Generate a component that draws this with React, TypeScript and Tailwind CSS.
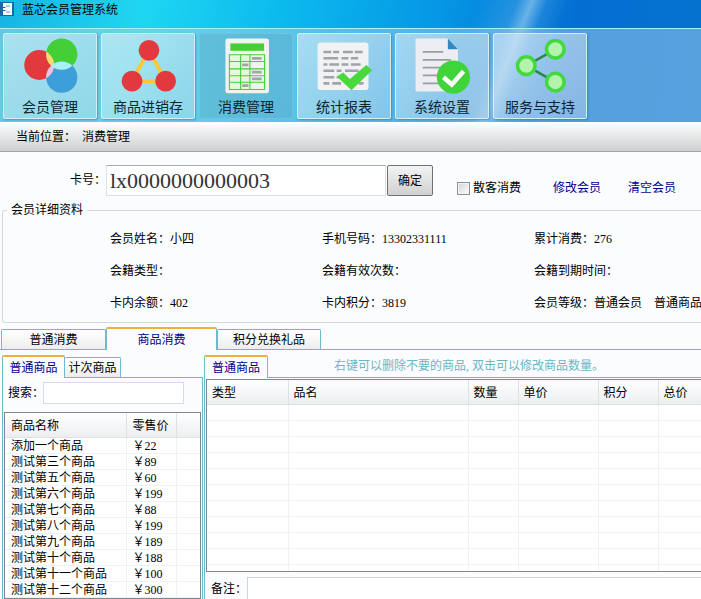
import React, { useState } from 'react';

interface ToolItem {
    label: string;
    icon: React.ReactNode;
}

interface Product {
    name: string;
    price: string;
}

interface TabProps {
    label: string;
    active?: boolean;
    className?: string;
    onClick?: () => void;
}

const MembersIcon = () => (
    <svg viewBox="0 0 94 60" className="h-[60px] w-full">
        <defs>
            <clipPath id="clipGreen"><circle cx="59" cy="20" r="16" /></clipPath>
            <clipPath id="clipBlue"><circle cx="59" cy="43.5" r="16" /></clipPath>
        </defs>
        <circle cx="36" cy="31" r="15.3" fill="#e2393f" />
        <circle cx="59" cy="20" r="16" fill="#43cf36" />
        <circle cx="59" cy="43.5" r="16" fill="#3d9fd9" />
        <circle cx="36" cy="31" r="15.3" fill="#fbd876" clipPath="url(#clipGreen)" />
        <circle cx="36" cy="31" r="15.3" fill="#f5bfe0" clipPath="url(#clipBlue)" />
        <circle cx="59" cy="20" r="16" fill="#a8f0f4" clipPath="url(#clipBlue)" />
    </svg>
);

const StockIcon = () => (
    <svg viewBox="0 0 94 60" className="h-[60px] w-full">
        <path d="M48 16 30.5 47.5H65Z" fill="none" stroke="#f6c93a" strokeWidth="4" />
        <circle cx="48" cy="16" r="10.6" fill="#e2393f" />
        <circle cx="30.7" cy="47.5" r="10.6" fill="#e2393f" />
        <circle cx="65" cy="47.5" r="10.6" fill="#e2393f" />
    </svg>
);

const ConsumeIcon = () => (
    <svg viewBox="0 0 94 60" className="h-[60px] w-full">
        <rect x="26" y="4" width="44.5" height="56" rx="2.5" fill="#f1f3f1" />
        <rect x="31" y="9" width="34.5" height="7.5" fill="#43cf36" />
        <path d="M30 20.5h11.5v35H30Z M41.5 20.5h9.5v35h-9.5Z" fill="#e2fbd8" />
        <path
            d="M30 20.5h36v35.5H30Z M41.5 20.5V56 M51 20.5V56 M30 27.5H66 M30 35H66 M30 42H66 M30 48.7H66"
            fill="none"
            stroke="#43cf36"
            strokeWidth="1.1"
        />
        <path d="M53 24.2h10 M43 31h6.5 M53 38.3h10 M53 45.2h10 M43 52h6.5" stroke="#a2a6a4" strokeWidth="2.8" />
    </svg>
);

const ReportIcon = () => (
    <svg viewBox="0 0 94 60" className="h-[60px] w-full">
        <rect x="20" y="8" width="52" height="48.5" rx="3" fill="#f1f2f4" />
        <g stroke="#a0a4a8" strokeWidth="2.6">
            <path d="M26 17.8h8M36 17.8h6M46 17.8h10M58 17.8h8" />
            <path d="M26 24.2h15M44.5 24.2h7M54 24.2h7.5" />
            <path d="M26 30.5h4M32 30.5h10M44.5 30.5h7M54 30.5h10" />
            <path d="M26 36.8h11M39.5 36.8h5M48 36.8h14" />
            <path d="M26 43.5h11M39.5 43.5h5" />
            <path d="M26 49.8h6M35 49.8h9M62 49.8h5" />
        </g>
        <path d="M39.7 42.7 46.3 38.7 53 45.3 69.7 31 75.7 36.5 54.7 56.7Z" fill="#49d93d" />
    </svg>
);

const SettingsIcon = () => (
    <svg viewBox="0 0 94 60" className="h-[60px] w-full">
        <path d="M20 5a1 1 0 0 1 1-1H53L63.3 15V57a1 1 0 0 1-1 1H21a1 1 0 0 1-1-1Z" fill="#eceef2" />
        <path d="M53 4V15H63.3Z" fill="#3588c0" />
        <path d="M27.3 17.7h21M27.3 25.7h29M27.3 33.7h29M27.3 41.7h20M27.3 49.7h20" stroke="#9b9da1" strokeWidth="1.8" />
        <circle cx="58.7" cy="43.3" r="17" fill="#3fd43a" />
        <path d="M48.5 43.5 57 51 69 37.5" fill="none" stroke="#fff" strokeWidth="4.6" />
    </svg>
);

const SupportIcon = () => (
    <svg viewBox="0 0 94 60" className="h-[60px] w-full">
        <path d="M62.7 15 33 31.7 62.7 48.5" fill="none" stroke="#2f8750" strokeWidth="2.6" />
        <g fill="#b4f3ad" stroke="#41d93c" strokeWidth="3.6">
            <circle cx="33" cy="31.7" r="9" />
            <circle cx="62.7" cy="15" r="9" />
            <circle cx="62.7" cy="48.5" r="9" />
        </g>
    </svg>
);

const tools: ToolItem[] = [
    { label: '会员管理', icon: <MembersIcon /> },
    { label: '商品进销存', icon: <StockIcon /> },
    { label: '消费管理', icon: <ConsumeIcon /> },
    { label: '统计报表', icon: <ReportIcon /> },
    { label: '系统设置', icon: <SettingsIcon /> },
    { label: '服务与支持', icon: <SupportIcon /> },
];

const memberInfo = [
    ['会员姓名：', '小四'],
    ['手机号码：', '13302331111'],
    ['累计消费：', '276'],
    ['会籍类型：', ''],
    ['会籍有效次数：', ''],
    ['会籍到期时间：', ''],
    ['卡内余额：', '402'],
    ['卡内积分：', '3819'],
    ['会员等级：', '普通会员', '普通商品'],
];

const products: Product[] = [
    { name: '添加一个商品', price: '22' },
    { name: '测试第三个商品', price: '89' },
    { name: '测试第五个商品', price: '60' },
    { name: '测试第六个商品', price: '199' },
    { name: '测试第七个商品', price: '88' },
    { name: '测试第八个商品', price: '199' },
    { name: '测试第九个商品', price: '189' },
    { name: '测试第十个商品', price: '188' },
    { name: '测试第十一个商品', price: '100' },
    { name: '测试第十二个商品', price: '300' },
];

const cartColumns = ['类型', '品名', '数量', '单价', '积分', '总价'];
const emptyRows = Array.from({ length: 11 }, (_, i) => i);
const mainTabs = ['普通消费', '商品消费', '积分兑换礼品'];
const mainTabWidths = ['w-[105px]', 'w-[111px]', 'w-[104px]'];

const Tab: React.FC<TabProps> = ({ label, active, className, onClick }) => (
    <button
        type="button"
        role="tab"
        aria-selected={!!active}
        onClick={onClick}
        className={
            (active
                ? 'relative -mb-px h-[23px] rounded-t-[2px] border-x border-t-2 border-x-[#6bbccb] border-t-[#edb038] bg-[#fbfcfe] text-[#00008f] '
                : 'h-5 rounded-t-[2px] border border-b-0 border-[#6bbccb] bg-linear-to-b from-white to-[#eceeec] pt-px ') + (className || '')
        }
    >
        {label}
    </button>
);

const App: React.FC = () => {
    const [activeTool, setActiveTool] = useState('消费管理');
    const [activeTab, setActiveTab] = useState('商品消费');
    const [productTab, setProductTab] = useState('普通商品');

    return (
        <div className="flex h-screen flex-col overflow-hidden bg-[#fbfcfe] font-['Liberation_Serif','Noto_Sans_CJK_SC',serif] text-[12px] leading-4 whitespace-nowrap text-black">
            <div className="shrink-0 bg-[linear-gradient(112deg,transparent_64%,#ffffff22_69%,#ffffff66_71%,#ffffff18_73%,transparent_76%),linear-gradient(100deg,#18b4e2_0%,#1fd6f2_20%,#0cbcee_38%,#0595e4_62%,#046fd2_80%,#0572cf_100%)]">
                <header className="flex h-7 items-start gap-2">
                    <svg viewBox="0 0 14 14" className="mt-[2px] h-[14px] w-[14px]">
                        <rect width="14" height="14" fill="#1c67a8" />
                        <path d="M3 1h9v12H3V9H5.500V8H3V6H5.500V5H3Z" fill="#f4fbff" />
                        <path d="M6 4h4M6 10h4" stroke="#5d9fd0" strokeWidth="1" />
                    </svg>
                    <h1 className="pt-[2px]">蓝芯会员管理系统</h1>
                </header>

                <nav className="flex h-[94px] gap-1 border-t border-[#a6f2fa] bg-linear-to-r from-[#a5d8de]/55 via-[#a8cfe6]/50 to-[#a8d0ee]/50 px-[3px] pt-1">
                    {tools.map((tool) => (
                        <button
                            key={tool.label}
                            type="button"
                            onClick={() => setActiveTool(tool.label)}
                            className={
                                'flex h-[86px] w-[94px] flex-col rounded-[2px] border ' +
                                (tool.label === activeTool
                                    ? 'border-[#6fc4e0] bg-[#5fa8c4]/40'
                                    : 'border-[#d3f0f7] bg-linear-to-br from-white/45 to-[#d8e0ee]/35 shadow-[1px_1px_2px_#2b6f9a88]')
                            }
                        >
                            {tool.icon}
                            <span className="w-full pt-1 text-center text-[14px] leading-5 text-[#0b2530]">{tool.label}</span>
                        </button>
                    ))}
                </nav>
            </div>

            <div className="flex h-[30px] shrink-0 items-center gap-[6px] border-b border-[#9fa3a6] bg-linear-to-b from-white to-[#cdd0d1] pl-4">
                <span>当前位置：</span>
                <span>消费管理</span>
            </div>

            <form className="flex h-11 shrink-0 items-end pl-[70px]" onSubmit={(e) => e.preventDefault()}>
                <label htmlFor="card" className="w-9 self-center pt-3">卡号：</label>
                <input
                    id="card"
                    defaultValue="lx0000000000003"
                    className="h-[31px] w-[280px] border border-[#dcdfe3] border-t-[#a9adb3] bg-white px-[3px] text-[22px] text-[#333] outline-none"
                />
                <button type="submit" className="ml-px h-[31px] w-[46px] rounded-[2px] border border-[#707070] bg-linear-to-b from-[#f4f4f4] to-[#d0d0d0] pt-px">
                    确定
                </button>
                <label className="ml-6 flex items-center gap-[3px]">
                    <input type="checkbox" className="h-[13px] w-[13px] appearance-none border border-[#8e8f8f] bg-linear-to-br from-[#cfd3d8] to-white shadow-[inset_0_0_0_1px_#f4f4f4] checked:bg-[#3579b8]" />
                    散客消费
                </label>
                <a href="#edit" className="ml-8 text-[#00008f]">修改会员</a>
                <a href="#clear" className="ml-[27px] text-[#00008f]">清空会员</a>
            </form>

            <fieldset className="mt-[6px] ml-[2px] min-w-0 shrink-0 rounded-l-[3px] border border-r-0 border-[#d5dadf] pt-[5px] pb-[3px]">
                <legend className="ml-1 px-1">会员详细资料</legend>
                <dl className="grid grid-cols-[212px_212px_1fr] overflow-hidden pl-[107px]">
                    {memberInfo.map(([label, ...values]) => (
                        <div key={label} className="flex h-8 min-w-0 items-center">
                            <dt>{label}</dt>
                            <dd className="flex gap-3">
                                {values.map((value) => (
                                    <span key={value}>{value}</span>
                                ))}
                            </dd>
                        </div>
                    ))}
                </dl>
            </fieldset>

            <div role="tablist" className="mt-1 flex h-[23px] shrink-0 items-end border-b border-[#6bbccb] pl-px">
                {mainTabs.map((tab, i) => (
                    <Tab key={tab} label={tab} active={tab === activeTab} onClick={() => setActiveTab(tab)} className={mainTabWidths[i]} />
                ))}
            </div>

            <main className="flex min-h-0 flex-1 gap-px pt-[5px] pl-[2px]">
                {/* product picker */}
                <section className="flex w-[201px] shrink-0 flex-col">
                    <div role="tablist" className="flex h-[23px] shrink-0 items-end border-b border-[#6bbccb]">
                        <Tab label="普通商品" active={productTab === '普通商品'} onClick={() => setProductTab('普通商品')} className="w-[63px]" />
                        <Tab label="计次商品" active={productTab === '计次商品'} onClick={() => setProductTab('计次商品')} className="w-[56px] border-l-0" />
                    </div>
                    <div className="min-h-0 flex-1 overflow-hidden border-x border-[#6bbccb] pr-px pl-px">
                        <div className="flex items-center pt-1 pb-2 pl-1">
                            <label htmlFor="search" className="w-[35px]">搜索：</label>
                            <input id="search" className="h-[22px] w-[141px] border border-[#d9dde2] bg-white px-1 outline-none" />
                        </div>
                        <div className="border border-[#7f8790] bg-white">
                            <table className="w-full table-fixed border-collapse">
                                <thead>
                                    <tr className="h-6 bg-linear-to-b from-white to-[#eceff0] text-left">
                                        <th className="w-[121px] border-r border-b border-[#dde1e4] p-0 pt-[3px] pl-[6px] font-normal">商品名称</th>
                                        <th className="w-[50px] border-r border-b border-[#dde1e4] p-0 pt-[3px] pl-[6px] font-normal">零售价</th>
                                        <th className="border-b border-[#dde1e4] p-0"></th>
                                    </tr>
                                </thead>
                                <tbody>
                                    {products.map((product) => (
                                        <tr key={product.name} className="h-4">
                                            <td className="border-r border-b border-[#eff1f3] p-0 pt-[2px] pl-[6px] leading-[13px]">{product.name}</td>
                                            <td className="border-r border-b border-[#eff1f3] p-0 pt-[2px] pl-[6px] leading-[13px]">￥{product.price}</td>
                                            <td className="border-b border-[#eff1f3] p-0"></td>
                                        </tr>
                                    ))}
                                </tbody>
                            </table>
                        </div>
                    </div>
                </section>

                {/* cart */}
                <section className="flex min-w-0 flex-1 flex-col">
                    <div className="flex h-[23px] shrink-0 items-end border-b border-[#6bbccb]">
                        <div role="tablist" className="flex items-end">
                            <Tab label="普通商品" active className="w-[64px]" />
                        </div>
                        <p className="ml-[66px] self-center text-[#6cb6c6]">右键可以删除不要的商品, 双击可以修改商品数量。</p>
                    </div>
                    <div className="min-h-0 flex-1 overflow-hidden border-l border-[#6bbccb] pt-px pl-px">
                        <div className="h-[193px] overflow-hidden border border-r-0 border-[#7f8790] bg-white">
                            <table className="w-full table-fixed border-collapse">
                                <colgroup>
                                    <col className="w-[81px]" />
                                    <col className="w-[180px]" />
                                    <col className="w-[50px]" />
                                    <col className="w-[80px]" />
                                    <col className="w-[60px]" />
                                    <col />
                                </colgroup>
                                <thead>
                                    <tr className="h-6 bg-linear-to-b from-white to-[#eceff0] text-left">
                                        {cartColumns.map((column) => (
                                            <th key={column} className="border-r border-b border-[#dde1e4] p-0 pt-[3px] pl-[5px] font-normal last:border-r-0">{column}</th>
                                        ))}
                                    </tr>
                                </thead>
                                <tbody>
                                    {emptyRows.map((row) => (
                                        <tr key={row} className="h-4">
                                            {cartColumns.map((column) => (
                                                <td key={column} className="border-r border-b border-[#eff1f3] p-0 last:border-r-0"></td>
                                            ))}
                                        </tr>
                                    ))}
                                </tbody>
                            </table>
                        </div>
                        <div className="flex items-center pt-[5px] pl-[5px]">
                            <label htmlFor="remark" className="w-9">备注：</label>
                            <input id="remark" className="h-6 min-w-0 flex-1 border border-r-0 border-[#cfd4d9] bg-white px-1 outline-none" />
                        </div>
                    </div>
                </section>
            </main>
        </div>
    );
};

export default App;
